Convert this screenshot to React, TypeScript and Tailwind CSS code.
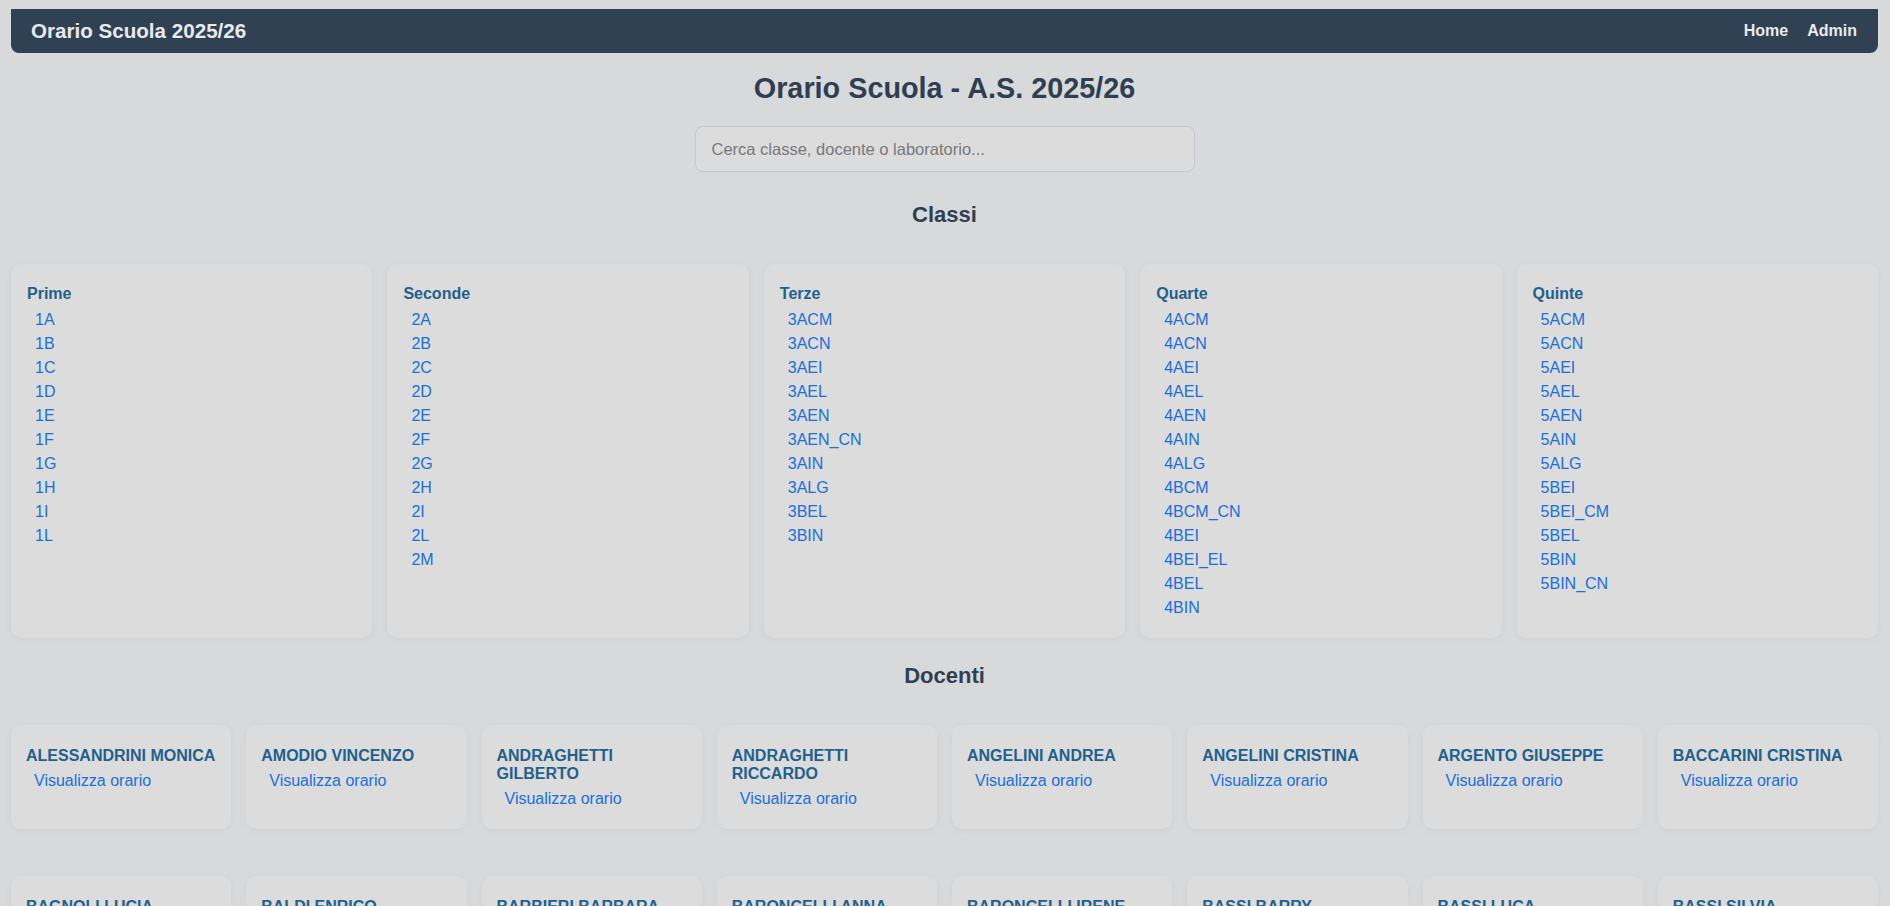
import React from "react";

const classi: { title: string; items: string[] }[] = [
  { title: "Prime", items: ["1A", "1B", "1C", "1D", "1E", "1F", "1G", "1H", "1I", "1L"] },
  { title: "Seconde", items: ["2A", "2B", "2C", "2D", "2E", "2F", "2G", "2H", "2I", "2L", "2M"] },
  { title: "Terze", items: ["3ACM", "3ACN", "3AEI", "3AEL", "3AEN", "3AEN_CN", "3AIN", "3ALG", "3BEL", "3BIN"] },
  {
    title: "Quarte",
    items: ["4ACM", "4ACN", "4AEI", "4AEL", "4AEN", "4AIN", "4ALG", "4BCM", "4BCM_CN", "4BEI", "4BEI_EL", "4BEL", "4BIN"],
  },
  {
    title: "Quinte",
    items: ["5ACM", "5ACN", "5AEI", "5AEL", "5AEN", "5AIN", "5ALG", "5BEI", "5BEI_CM", "5BEL", "5BIN", "5BIN_CN"],
  },
];

const docenti = [
  "ALESSANDRINI MONICA",
  "AMODIO VINCENZO",
  "ANDRAGHETTI GILBERTO",
  "ANDRAGHETTI RICCARDO",
  "ANGELINI ANDREA",
  "ANGELINI CRISTINA",
  "ARGENTO GIUSEPPE",
  "BACCARINI CRISTINA",
  "BAGNOLI LUCIA",
  "BALDI ENRICO",
  "BARBIERI BARBARA",
  "BARONCELLI ANNA",
  "BARONCELLI IRENE",
  "BASSI BARRY",
  "BASSI LUCA",
  "BASSI SILVIA",
  "BATTISTINI MARCO",
  "BELLINI PAOLA",
  "BENEDETTI LUCA",
  "BERARDI SARA",
  "BERNABEI GIULIA",
  "BERTI ALESSANDRO",
  "BIANCHI FRANCESCA",
  "BONDI STEFANO",
];

export default function App() {
  return (
    <div
      className="min-h-screen bg-[#d8d9db] pl-[11px] pr-[12px] pt-[9px] pb-10"
      style={{ fontFamily: '"Liberation Sans", Arial, Helvetica, sans-serif' }}
    >
      <header className="flex h-[44px] items-center justify-between rounded-b-[8px] bg-[#2f4153] px-5">
        <span className="text-[20.6px] font-bold text-[#e8eaed]">Orario Scuola 2025/26</span>
        <nav className="flex items-center gap-[19px] pr-px text-[16px] font-bold text-[#e8eaed]">
          <a href="#">Home</a>
          <a href="#">Admin</a>
        </nav>
      </header>

      <h1 className="mt-[19px] text-center text-[28.8px] font-bold leading-[33px] text-[#2e3f52]">
        Orario Scuola - A.S. 2025/26
      </h1>

      <div className="mt-[21px] flex justify-center">
        <input
          type="text"
          placeholder="Cerca classe, docente o laboratorio..."
          className="h-[46px] w-[500px] rounded-[8px] border border-[#c3c7cc] bg-[#dcdcdc] px-4 text-[16.5px] text-[#333] placeholder:text-[#77797c] outline-none"
        />
      </div>

      <h2 className="mt-[30px] text-center text-[22px] font-bold leading-[25px] text-[#2e3f52]">Classi</h2>

      <div className="mt-[37px] grid grid-cols-5 gap-[15px]">
        {classi.map((c) => (
          <div
            key={c.title}
            className="rounded-[10px] bg-[#dcdcdc] pt-[21px] pb-[18px] pl-[16px] pr-[15px] shadow-[0_2px_8px_rgba(0,0,0,0.04)]"
          >
            <h3 className="text-[16px] font-bold leading-[18px] text-[#21618c]">{c.title}</h3>
            <ul className="mt-[5px] pl-2">
              {c.items.map((it) => (
                <li key={it} className="text-[16px] leading-[24px] text-[#1a6fdb]">
                  <a href="#">{it}</a>
                </li>
              ))}
            </ul>
          </div>
        ))}
      </div>

      <h2 className="mt-[25px] text-center text-[22px] font-bold leading-[25px] text-[#2e3f52]">Docenti</h2>

      <div className="mt-[37px] grid grid-cols-8 gap-x-[15px] gap-y-[47px]">
        {docenti.map((d) => (
          <div
            key={d}
            className="rounded-[10px] bg-[#dcdcdc] pt-[22px] pb-[18px] pl-[15px] pr-[10px] shadow-[0_2px_8px_rgba(0,0,0,0.04)]"
          >
            <h3 className="text-[16px] font-bold leading-[18px] text-[#21618c]">{d}</h3>
            <div className="mt-[4px] pl-2 text-[16px] leading-[24px] text-[#1a6fdb]">
              <a href="#">Visualizza orario</a>
            </div>
          </div>
        ))}
      </div>
    </div>
  );
}
